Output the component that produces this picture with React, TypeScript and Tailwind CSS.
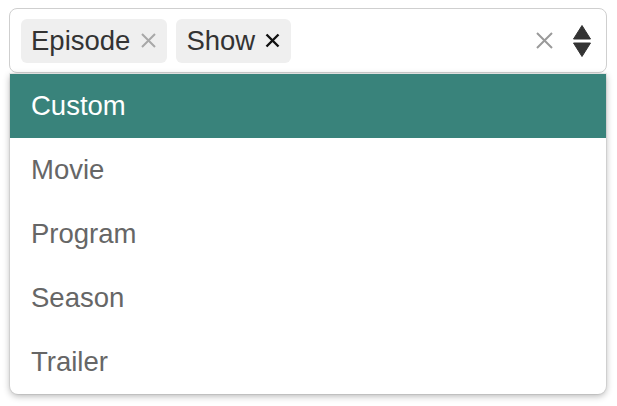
import React from "react";

const options = ["Custom", "Movie", "Program", "Season", "Trailer"];

function XIcon({ size, stroke, color, width }: { size: number; stroke: number; color: string; width: number }) {
  return (
    <svg width={width} height={width} viewBox={`0 0 ${width} ${width}`} className="block">
      <path
        d={`M${(width - size) / 2} ${(width - size) / 2} L${(width + size) / 2} ${(width + size) / 2} M${(width + size) / 2} ${(width - size) / 2} L${(width - size) / 2} ${(width + size) / 2}`}
        stroke={color}
        strokeWidth={stroke}
        strokeLinecap="butt"
        fill="none"
      />
    </svg>
  );
}

export default function App() {
  return (
    <div
      className="w-[617px] h-[406px] bg-white pt-[8px] pl-[9px]"
      style={{ fontFamily: '"Liberation Sans", Arial, Helvetica, sans-serif' }}
    >
      <div className="relative w-[598px]">
        <div className="flex items-center h-[65px] border border-[#cfcfcf] rounded-[8px] pl-[11px] pr-[14px] bg-white">
          <div className="flex items-center gap-[9px] flex-1">
            <div className="flex items-center h-[44px] rounded-[6px] bg-[#efefef] pl-[10px] pr-[10px]">
              <span className="text-[27.5px] leading-none text-[#333]">Episode</span>
              <span className="ml-[10px]">
                <XIcon size={13} stroke={2} color="#a8a8a8" width={17} />
              </span>
            </div>
            <div className="flex items-center h-[44px] rounded-[6px] bg-[#efefef] pl-[10px] pr-[11px]">
              <span className="text-[27.5px] leading-none text-[#333]">Show</span>
              <span className="ml-[10px]">
                <XIcon size={12} stroke={2.4} color="#111" width={15} />
              </span>
            </div>
          </div>
          <div className="flex items-center gap-[19px]">
            <XIcon size={15} stroke={2} color="#9a9a9a" width={17} />
            <svg width="20" height="34" viewBox="0 0 20 34" className="block" style={{ filter: "blur(0.5px)" }}>
              <path d="M10 1.5 L18.5 15 L1.5 15 Z" fill="#333" stroke="#333" strokeWidth="1" strokeLinejoin="round" />
              <path d="M1.5 19 L18.5 19 L10 32.5 Z" fill="#333" stroke="#333" strokeWidth="1" strokeLinejoin="round" />
            </svg>
          </div>
        </div>
        <div className="absolute top-[66px] left-[1px] right-[1px] bg-white rounded-b-[8px] shadow-[0_0_0_1px_rgba(0,0,0,0.06),0_2px_7px_rgba(0,0,0,0.3)] overflow-hidden">
          {options.map((o, i) => (
            <div
              key={o}
              className={
                i === 0
                  ? "h-[64px] flex items-center pl-[21px] bg-[#39837b] text-white text-[27.5px]"
                  : "h-[64px] flex items-center pl-[21px] text-[#666] text-[27.5px]"
              }
            >
              {o}
            </div>
          ))}
        </div>
      </div>
    </div>
  );
}
